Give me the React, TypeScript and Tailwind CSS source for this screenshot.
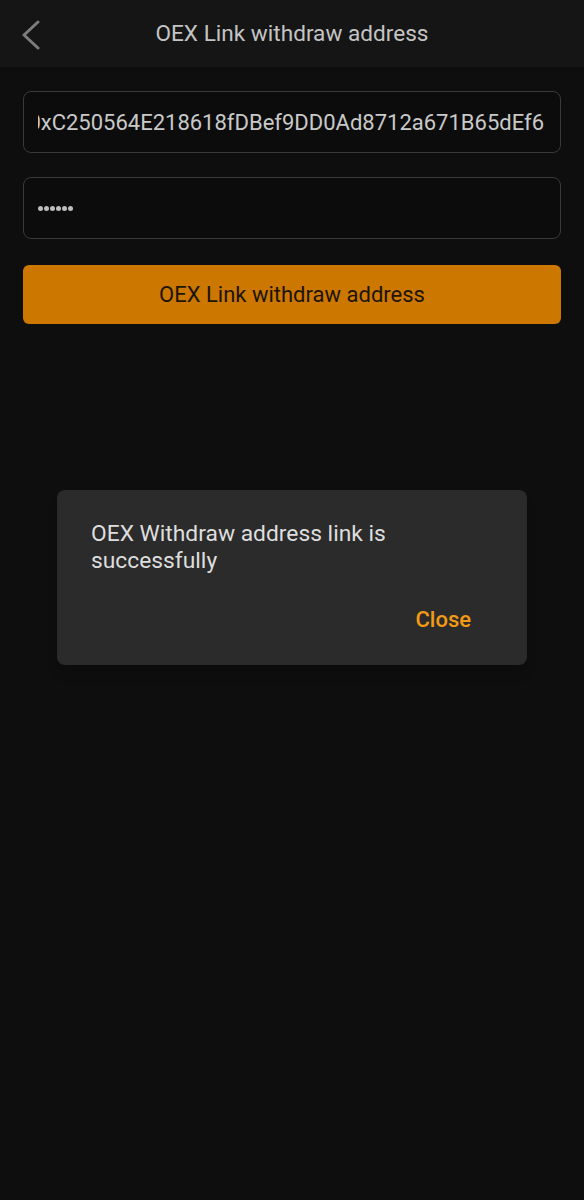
const address = "0xC250564E218618fDBef9DD0Ad8712a671B65dEf6";

export default function App() {
  return (
    <div className="relative h-[1200px] w-[584px] overflow-hidden bg-[#0e0e0e] font-['Roboto',sans-serif]">
      {/* header */}
      <div className="relative flex h-[67px] items-center justify-center bg-[#151515]">
        <svg className="absolute left-[18px] top-[18px]" width="28" height="32" viewBox="0 0 28 32">
          <polyline points="20,4 6,17 20,30" fill="none" stroke="#7d7d7d" strokeWidth="3" strokeLinecap="round" strokeLinejoin="round" />
        </svg>
        <span className="text-[22.6px] text-[#c4c4c4]">OEX Link withdraw address</span>
      </div>

      <div className="flex flex-col px-[23px] pt-[24px]">
        <div className="flex h-[62px] items-center rounded-[8px] border border-[#3a3a3a] bg-[#0c0c0c] pl-[14px] pr-[16px]">
          <div className="flex flex-1 justify-end overflow-hidden whitespace-nowrap">
            <span className="text-[22px] text-[#c9c9c9]">{address}</span>
          </div>
        </div>

        <div className="mt-[24px] flex h-[62px] items-center gap-[1px] rounded-[8px] border border-[#3a3a3a] bg-[#0c0c0c] px-[14px]">
          {[0, 1, 2, 3, 4, 5].map((i) => (
            <span key={i} className="h-[5px] w-[5px] rounded-full bg-[#bdbdbd]" />
          ))}
        </div>

        <button className="mt-[26px] flex h-[59px] items-center justify-center rounded-[6px] bg-[#cc7700] text-[22px] text-[#1c1407]">
          OEX Link withdraw address
        </button>
      </div>

      {/* dialog */}
      <div className="absolute left-[57px] top-[490px] flex h-[175px] w-[470px] flex-col rounded-[8px] bg-[#2b2b2b] px-[34px] pt-[30px] shadow-lg">
        <p className="text-[22.8px] leading-[27px] text-[#dedede]">
          OEX Withdraw address link is
          <br />
          successfully
        </p>
        <div className="mt-[29px] flex justify-end pr-[22px]">
          <span className="text-[22px] font-medium text-[#f39a14]">Close</span>
        </div>
      </div>
    </div>
  );
}
